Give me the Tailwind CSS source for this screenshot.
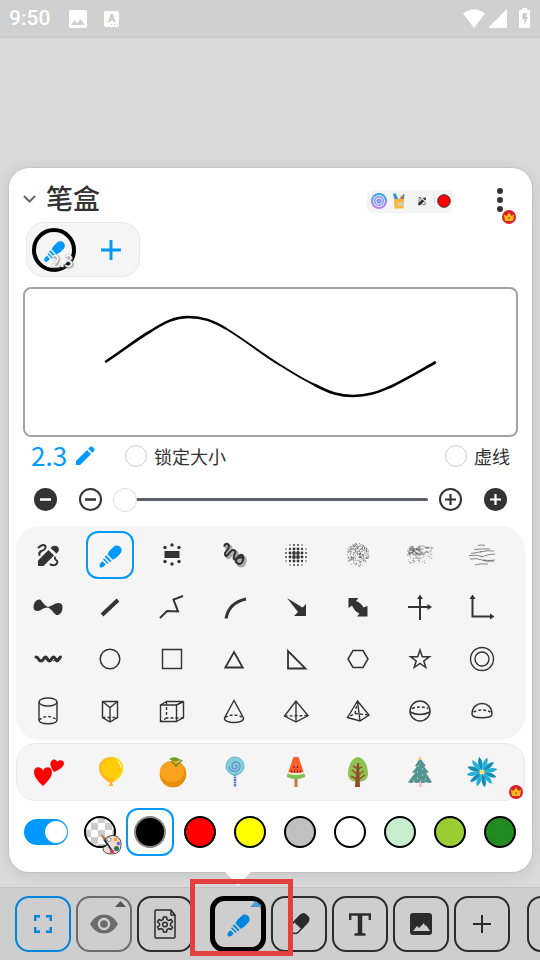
<!DOCTYPE html>
<html lang="zh-CN">
<head>
  <meta charset="UTF-8" />
  <meta name="viewport" content="width=device-width, initial-scale=1.0" />
  <title>笔盒</title>
  <script src="https://cdn.jsdelivr.net/npm/@tailwindcss/browser@4"></script>
</head>
<body class="bg-[#d9d9d9] text-[#333] font-['Noto_Sans_CJK_SC',sans-serif] min-h-screen flex flex-col overflow-x-hidden">

  <!-- Shared icons -->
  <svg class="hidden">
    <symbol id="marker" viewBox="0 0 32 32">
      <g transform="translate(16 18) rotate(-44)" fill="currentColor">
        <path d="M0-3.800 4-4.800H9.500a4.800 4.800 0 0 1 0 9.600H4L0 3.800z" />
        <path d="M-3.600-3.900h2v7.800h-2zM-6.600-3.300h1.500v6.600h-1.500zM-14-.8l2.200-1.400h3.500V2.400h-3.500L-14 1.500z" />
      </g>
    </symbol>
    <symbol id="magic" viewBox="0 0 32 32">
      <path d="M6 27v-5.500L16.500 11l5.500 5.500L11.500 27z" fill="currentColor" />
      <path d="m18.500 9 1.500-1.500q3-1.500 5.500 0 2.500 2.500.5 5.500L24.500 14.500z" fill="currentColor" />
      <path d="M6.500 8.500Q12 4 13.500 7.500q.5 3-4 4.500-3 1.500-2 4M18.500 25.500q4 1.500 6-.5 2-2.500-.5-4-1.500-1-1-2.500" fill="none" stroke="currentColor" stroke-width="2" stroke-linecap="round" />
    </symbol>
    <symbol id="crown" viewBox="0 0 14 14">
      <circle cx="7" cy="7" r="7" fill="#d8202c" />
      <path d="M1.800 4.500 4.500 6 7 2.500 9.500 6l2.700-1.500L11 11H3z" fill="#fbb917" />
      <circle cx="7" cy="8" r="1" fill="#c0501c" />
    </symbol>
  </svg>

  <!-- Status bar -->
  <header class="h-[38px] shrink-0 bg-[#d0d0d0] border-b border-[#c8c8c8] text-white flex items-center pl-[9px] pr-[10px]">
    <span class="font-[Roboto,sans-serif] font-medium text-[21px] leading-none">9:50</span>
    <svg class="w-[18px] h-[18px] ml-[19px]" viewBox="0 0 18 18"><rect width="18" height="18" rx="2" fill="#fff" /><path d="m2 15 3.500-5 2.700 3.500L11.500 9 16 15z" fill="#d0d0d0" /></svg>
    <span class="relative ml-[17px] w-[15px] h-4 rounded-xs bg-white text-[#c8c8c8] font-[Roboto,sans-serif] font-black text-[11px] leading-4 text-center">A
      <svg class="absolute right-px bottom-px w-[7px] h-[2px]" viewBox="0 0 7 2" fill="#c8c8c8"><path d="M0 0h1v1H0zM3 0h1v1H3zM6 0h1v1H6z" /></svg>
    </span>
    <svg class="w-[22px] h-[19px] ml-auto" viewBox="0 0 22 19"><path d="M0 4.500Q11-3.500 22 4.500L11 19z" fill="#fff" /></svg>
    <svg class="w-[18px] h-[19px] ml-1" viewBox="0 0 18 19"><path d="M18 0v17.500q0 1.500-1.500 1.500H0v-1z" fill="#fff" /></svg>
    <svg class="w-[11px] h-5 ml-3 mb-[2px]" viewBox="0 0 11 20"><path d="M3 0h5v2h2q1 0 1 1v16q0 1-1 1H1q-1 0-1-1V3q0-1 1-1h2z" fill="#fff" /><path d="M4 5h4L6.800 9H9l-4 8 .5-6H3z" fill="#c8c8c8" /></svg>
  </header>

  <!-- Pen box -->
  <main class="grow flex flex-col justify-end pl-[9px] pr-2 pb-[15px] bg-[#d9d9d9]">
    <section class="relative bg-white rounded-[20px] pb-4 ring-1 ring-black/5 shadow-[0_2px_14px_rgba(0,0,0,0.1)]">
      <div class="px-[14px]">
        <div class="flex items-center h-[54px] pt-2">
          <button aria-label="收起"><svg class="w-[13px] h-2" viewBox="0 0 13 8"><path d="m1 1 5.500 5.500L12 1" fill="none" stroke="#666" stroke-width="2" /></svg></button>
          <h1 class="ml-[10px] mb-1 text-[27px] leading-none font-medium">笔盒</h1>
          <button class="ml-auto mr-[38px] mt-1 w-[86px] h-[23px] rounded-md bg-[#f4f4f4] flex items-center justify-between pl-1 pr-px" aria-label="快捷工具">
            <svg class="w-4 h-4" viewBox="0 0 16 16" fill="none" stroke-width="2">
              <defs><linearGradient id="ring" x2="0" y2="1"><stop stop-color="#2aa8f8" /><stop offset="1" stop-color="#c878fa" /></linearGradient></defs>
              <circle cx="8" cy="8" r="7" stroke="url(#ring)" /><circle cx="8" cy="8" r="4.300" stroke="#8294fa" stroke-width="1.500" /><circle cx="8" cy="8" r="1.600" stroke="#7b92fb" />
            </svg>
            <svg class="w-3 h-4" viewBox="0 0 12 16"><path d="M0 1.500Q1.500-.5 3 1l2 5H1.500z" fill="#2f91d4" /><path d="m6 6 2.500-4L10 3 9 7z" fill="#ef8a6d" /><path d="m8 6 2.500-5 1 .5L10.500 7z" fill="#5679a0" /><path d="M1 6h10l-.5 9.500h-9z" fill="#ffb63c" /><path d="M5 9.500h5v3H5z" fill="#b9dccb" /></svg>
            <svg class="w-3 h-3 ml-1"><use href="#magic" /></svg>
            <svg class="w-[18px] h-[14px]" viewBox="0 0 18 14"><path d="M.5 4v6" stroke="#ddd" /><circle cx="10" cy="7" r="6.300" fill="#f00" stroke="#333" /></svg>
          </button>
          <button class="relative mr-[9px] mt-[2px] w-[18px] h-6" aria-label="更多">
            <svg class="w-[18px] h-6" viewBox="0 0 18 24" fill="#333"><circle cx="9" cy="3" r="3" /><circle cx="9" cy="12" r="3" /><circle cx="9" cy="21" r="3" /></svg>
            <svg class="absolute left-[11px] top-[22px] w-[14px] h-[14px]"><use href="#crown" /></svg>
          </button>
        </div>

        <div class="ml-[3px] w-[114px] h-[55px] rounded-[18px] border border-[#e8e8e8] bg-[#f5f5f5] flex items-center pl-[5px]">
          <button class="relative w-11 h-11 rounded-full border-4 border-black text-[#0099ff] flex items-center justify-center" aria-label="画笔 2.3">
            <svg class="w-[30px] h-[30px]"><use href="#marker" /></svg>
            <span class="absolute left-[15px] top-[18px] text-[16px] leading-5 text-white [text-shadow:1px_1px_2px_#777,0_0_2px_#888]">2.3</span>
          </button>
          <button class="ml-[25px] text-[#0099ff]" aria-label="添加画笔"><svg class="w-5 h-5" viewBox="0 0 20 20"><path d="M10 0v20M0 10h20" stroke="currentColor" stroke-width="3" /></svg></button>
        </div>

        <!-- Stroke preview -->
        <div class="mt-[10px] h-[150px] border-2 border-[#a3a3a3] rounded-lg">
          <svg class="w-full h-full" viewBox="0 0 491 146" fill="none" stroke="#000" stroke-linecap="round">
            <path d="M81 72.500C100 60 112 50 126 42 140 33 150 28 163 28 178 28 188 32 200 39" stroke-width="2.600" />
            <path d="M200 39C220 51 234 63 255 76 268 84 277 90 290 96" stroke-width="2" />
            <path d="M290 96C305 104 315 107 328 107 345 107 355 102 365 98 380 91 395 82 410 73.500" stroke-width="2.600" />
          </svg>
        </div>

        <div class="flex items-center h-[38px] px-2">
          <button class="flex items-center gap-[9px] pb-[2px] text-[#0099ff] text-[26px] leading-none">2.3
            <svg class="w-[19px] h-[19px]" viewBox="0 0 19 19" fill="currentColor"><path d="M0 15 11 4l4 4L4 19H0zM12.200 2.800l2-2q1-1 2 0l2 2q1 1 0 2l-2 2z" /></svg>
          </button>
          <label class="ml-[30px] flex items-center gap-[7px] pb-px text-[18px] leading-none">
            <input type="checkbox" class="appearance-none w-[22px] h-[22px] rounded-full border border-[#ccc] bg-white checked:bg-[#0099ff]" />锁定大小
          </label>
          <label class="ml-auto flex items-center gap-[7px] pb-px text-[18px] leading-none">
            <input type="checkbox" class="appearance-none w-[22px] h-[22px] rounded-full border border-[#ccc] bg-white checked:bg-[#0099ff]" />虚线
          </label>
        </div>

        <!-- Size slider -->
        <div class="flex items-center h-12">
          <button class="w-[45px] flex justify-center" aria-label="减小很多"><svg class="w-[23px] h-[23px]" viewBox="0 0 23 23"><circle cx="11.500" cy="11.500" r="11.500" fill="#333" /><path d="M6 11.500h11" stroke="#fff" stroke-width="2.500" /></svg></button>
          <button class="w-[45px] flex justify-center" aria-label="减小"><svg class="w-[23px] h-[23px]" viewBox="0 0 23 23" fill="none" stroke="#333"><circle cx="11.500" cy="11.500" r="10.500" stroke-width="2" /><path d="M6 11.500h11" stroke-width="2.500" /></svg></button>
          <input type="range" min="0" max="100" value="0" aria-label="画笔大小" class="grow min-w-0 h-6 appearance-none bg-transparent [&::-webkit-slider-runnable-track]:h-[3px] [&::-webkit-slider-runnable-track]:rounded-full [&::-webkit-slider-runnable-track]:bg-[#5c606b] [&::-webkit-slider-thumb]:appearance-none [&::-webkit-slider-thumb]:w-6 [&::-webkit-slider-thumb]:h-6 [&::-webkit-slider-thumb]:-mt-[10px] [&::-webkit-slider-thumb]:rounded-full [&::-webkit-slider-thumb]:border [&::-webkit-slider-thumb]:border-[#ddd] [&::-webkit-slider-thumb]:bg-white" />
          <button class="w-[45px] flex justify-center" aria-label="增大"><svg class="w-[23px] h-[23px]" viewBox="0 0 23 23" fill="none" stroke="#333"><circle cx="11.500" cy="11.500" r="10.500" stroke-width="2" /><path d="M6 11.500h11M11.500 6v11" stroke-width="2.200" /></svg></button>
          <button class="w-[45px] flex justify-center" aria-label="增大很多"><svg class="w-[23px] h-[23px]" viewBox="0 0 23 23"><circle cx="11.500" cy="11.500" r="11.500" fill="#333" /><path d="M6 11.500h11M11.500 6v11" stroke="#fff" stroke-width="2.200" /></svg></button>
        </div>
      </div>

      <!-- Brushes and shapes -->
      <div class="mx-[7px] mt-[3px] py-[3px] pl-px pr-3 bg-[#f5f5f5] rounded-3xl grid grid-cols-8 auto-rows-[52px] [&>button]:flex [&>button]:items-center [&>button]:justify-center">
        <button aria-label="智能笔"><svg class="w-8 h-8"><use href="#magic" /></svg></button>
        <button aria-label="马克笔"><span class="w-12 h-12 rounded-xl border-2 border-[#0099ff] text-[#0099ff] flex items-center justify-center"><svg class="w-8 h-8"><use href="#marker" /></svg></span></button>
        <button aria-label="荧光笔"><svg class="w-8 h-8" viewBox="0 0 32 32" fill="#333"><path d="M8.500 12h15v7h-15z" /><circle cx="16" cy="6" r="1.700" /><circle cx="16" cy="25" r="1.700" /><circle cx="9" cy="8.500" r="1.700" /><circle cx="23" cy="8.500" r="1.700" /><circle cx="9" cy="22.500" r="1.700" /><circle cx="23" cy="22.500" r="1.700" /></svg></button>
        <button aria-label="阴影笔"><svg class="w-8 h-8" viewBox="0 0 32 32" fill="none" stroke-linecap="round" stroke-linejoin="round"><path d="M6.500 7c0-3 5-3 4.500 1-1 4-5 5-4 8 2 3 5-4 8-5 4 0 2 4 1 6-1 4 1 4 3 2 2-3 5-4 6-2 1 4-1 8-4 8-4-1-4-5-1-6 3-2 5 0 5 1" stroke="#aaa" stroke-width="3" transform="translate(2 2)" /><path d="M6.500 7c0-3 5-3 4.500 1-1 4-5 5-4 8 2 3 5-4 8-5 4 0 2 4 1 6-1 4 1 4 3 2 2-3 5-4 6-2 1 4-1 8-4 8-4-1-4-5-1-6 3-2 5 0 5 1" stroke="#333" stroke-width="2.200" /></svg></button>
        <button aria-label="网点"><svg id="dots" class="w-8 h-8" viewBox="0 0 32 32" fill="#333"></svg></button>
        <button aria-label="喷枪"><svg id="spray" class="w-8 h-8" viewBox="0 0 32 32" stroke="#444" fill="none"></svg></button>
        <button aria-label="蜡笔"><svg id="crayon" class="w-8 h-8" viewBox="0 0 32 32" stroke="#555" fill="none"></svg></button>
        <button aria-label="干笔"><svg class="w-8 h-8" viewBox="0 0 32 32" fill="none" stroke="#555" stroke-width=".7"><path d="M12 6.500q4-1 7 0M8 10.500q7-1 16-.5M14 13q7-2 14-1M5 14.500q7-1 11-2M3 16.500q8-1 13 1M15 18q8-3 14-3M4 20q8-1 12 1t12 1M17 21q6 1 12 0M9 26q6-2 13-1" /></svg></button>

        <button aria-label="粗细笔"><svg class="w-8 h-8" viewBox="0 0 32 32" fill="#333"><path d="M1.500 16.500C1.500 11 5 8 8 8.500c2 1 3 5 8 7.500 4-1 7-4 10-4 5 0 5 3 4 8-2 5-6 5-8 2-2-2-3-4-6-5.500-5 0-8 4-11 3.500q-3.500-.5-3.500-3.500z" /></svg></button>
        <button aria-label="直线"><svg class="w-8 h-8" viewBox="0 0 32 32"><path d="M8 24 24 9" stroke="#333" stroke-width="4" /></svg></button>
        <button aria-label="折线"><svg class="w-8 h-8" viewBox="0 0 32 32"><path d="m4 27 7-7 11 .5-4.500-12L27 5" fill="none" stroke="#333" stroke-width="2" /></svg></button>
        <button aria-label="弧线"><svg class="w-8 h-8" viewBox="0 0 32 32"><path d="M8 27.500Q11 11.500 28 8" fill="none" stroke="#333" stroke-width="3" /></svg></button>
        <button aria-label="箭头"><svg class="w-8 h-8" viewBox="0 0 32 32"><path d="m7 7 15.500 9.500L26 13v12H14l4-4z" fill="#333" /></svg></button>
        <button aria-label="双向箭头"><svg class="w-8 h-8" viewBox="0 0 32 32"><path d="M6.500 7h10l-2.500 3q5 1.500 7.500 6.500L25.500 15v10.500h-10.500l2.500-3Q12.500 20.500 10 14.500L6.500 17z" fill="#333" /></svg></button>
        <button aria-label="坐标轴"><svg class="w-8 h-8" viewBox="0 0 32 32" fill="#333"><path d="M16 6v23M4 16h21" stroke="#333" stroke-width="2" /><path d="m16 3.500 3 4.500h-6zM28 16l-4.500 3v-6z" /></svg></button>
        <button aria-label="直角坐标"><svg class="w-8 h-8" viewBox="0 0 32 32" fill="#333"><path d="M6.500 7v18.500H25" fill="none" stroke="#333" stroke-width="2" /><path d="m6.500 3.500 3 4.500h-6zM28.500 25.500l-4.500 3v-6z" /></svg></button>

        <button aria-label="波浪线"><svg class="w-8 h-8" viewBox="0 0 32 32"><path d="M4 14q2 0 3 2.500t3.500 0 3.500 0 3.500 0 3 0 3.500 0T28 14" fill="none" stroke="#333" /><path d="M4 14q1.500 0 2.500 2t2.500 2 2.500-2 2-2 2 2 2 2 2-2 2-2 2 2 1.500 2 2-2T28.500 14" fill="none" stroke="#333" stroke-width="3" stroke-linejoin="round" stroke-linecap="round" /></svg></button>
        <button aria-label="圆"><svg class="w-8 h-8" viewBox="0 0 32 32"><circle cx="16" cy="16" r="9.800" fill="none" stroke="#333" stroke-width="1.500" /></svg></button>
        <button aria-label="矩形"><svg class="w-8 h-8" viewBox="0 0 32 32"><path d="M6.500 6.500h19v19h-19z" fill="none" stroke="#333" stroke-width="1.400" /></svg></button>
        <button aria-label="三角形"><svg class="w-8 h-8" viewBox="0 0 32 32"><path d="m16 9 8.700 15.500H7.300z" fill="none" stroke="#333" stroke-width="1.800" /></svg></button>
        <button aria-label="直角三角形"><svg class="w-8 h-8" viewBox="0 0 32 32"><path d="M8 8v17.500h17.500z" fill="none" stroke="#333" stroke-width="1.800" /></svg></button>
        <button aria-label="六边形"><svg class="w-8 h-8" viewBox="0 0 32 32"><path d="M11 7.500h10l5 8.500-5 8.500H11L6 16z" fill="none" stroke="#333" stroke-width="1.500" /></svg></button>
        <button aria-label="五角星"><svg class="w-8 h-8" viewBox="0 0 32 32"><path d="m16 7 2.300 6.700h7.200l-5.700 4.300 2 6.500L16 20.500l-5.800 4 2-6.500-5.700-4.300h7.200z" fill="none" stroke="#333" stroke-width="1.500" /></svg></button>
        <button aria-label="同心圆"><svg class="w-8 h-8" viewBox="0 0 32 32" fill="none" stroke="#333" stroke-width="1.400"><circle cx="16" cy="16" r="11.500" /><circle cx="16" cy="16" r="7" /></svg></button>

        <button aria-label="圆柱"><svg class="w-8 h-8" viewBox="0 0 32 32" fill="none" stroke="#333" stroke-width="1.400"><ellipse cx="16" cy="7" rx="9" ry="4" /><path d="M7 7v18c0 5 18 5 18 0V7" /><path d="M7 25q9-7 18 0" stroke-dasharray="3 2" /></svg></button>
        <button aria-label="三棱柱"><svg class="w-8 h-8" viewBox="0 0 32 32" fill="none" stroke="#333" stroke-width="1.400"><path d="M8.500 6.500h15v16L16 27l-7.500-4.500zl7.500 6 7.500-6M16 12.500V27" /><path d="M8.500 22.500h15" stroke-dasharray="3 2" /></svg></button>
        <button aria-label="立方体"><svg class="w-8 h-8" viewBox="0 0 32 32" fill="none" stroke="#333" stroke-width="1.400"><path d="M4.500 10h16v16.500h-16zl6-3.500h17l-7 3.500M27.500 6.500v16l-7 4" /><path d="M10.500 7v16h17M10.500 23l-6 3.500" stroke-dasharray="3 2" /></svg></button>
        <button aria-label="圆锥"><svg class="w-8 h-8" viewBox="0 0 32 32" fill="none" stroke="#333" stroke-width="1.400"><path d="M16 5.500 6.500 23c-1 6 20 6 19 0z" /><path d="M7 22.500q9-5 18 0" stroke-dasharray="3 2" /></svg></button>
        <button aria-label="四面体"><svg class="w-8 h-8" viewBox="0 0 32 32" fill="none" stroke="#333" stroke-width="1.400"><path d="M16 6 4.500 21 16 27l12-6.500zv21" /><path d="M4.500 21 28 20.500" stroke-dasharray="3 2" /></svg></button>
        <button aria-label="四棱锥"><svg class="w-8 h-8" viewBox="0 0 32 32" fill="none" stroke="#333" stroke-width="1.400"><path d="M15.500 6 5.500 22.500 18 26l9-6zL18 26" /><path d="M15.500 6 13 18.500l-7.500 4M13 18.500l14 1.500" stroke-dasharray="3 2" /></svg></button>
        <button aria-label="球体"><svg class="w-8 h-8" viewBox="0 0 32 32" fill="none" stroke="#333" stroke-width="1.500"><circle cx="16" cy="16" r="10" /><path d="M6 17q10 5 20 0" /><path d="M8 13.500q8-3 16 0" stroke-dasharray="3 2" /></svg></button>
        <button aria-label="半球"><svg class="w-8 h-8" viewBox="0 0 32 32" fill="none" stroke="#333" stroke-width="1.500"><path d="M6 19C6 5 26 5 26 19c0 5-20 5-20 0z" /><path d="M7.500 17q8.500-4 17 0" stroke-dasharray="3 2" /></svg></button>
      </div>

      <!-- Stickers -->
      <div class="relative mx-[7px] mt-[3px] h-[58px] pl-px pr-[11px] bg-[#f5f5f5] border border-[#e8e8e8] rounded-[20px] grid grid-cols-8 [&>button]:flex [&>button]:items-center [&>button]:justify-center">
        <button aria-label="爱心"><svg class="w-8 h-8" viewBox="0 0 32 32" fill="#f00"><path d="M10 30C5 25 1 21 1 16c0-6 7-6 9-1.500C12 10 19 10 19 16c0 5-4 9-9 14z" /><path d="M21 16c-3-4-5-8-2.500-11C21 2 24 4 24 6c2-3 7-2 7 1 0 4-5 7-10 9z" /></svg></button>
        <button aria-label="气球"><svg class="w-8 h-8" viewBox="0 0 32 32"><path d="M16 1C9 1 4 6 4 12c0 7 6 12 11 15l-1.500 3h5L17 27c5-3 11-8 11-15C28 6 23 1 16 1z" fill="#ffb51f" /><path d="M18 1c6 1 10 5 10 11 0 7-5 12-10 14 3-8 2-18 0-25z" fill="#ffda00" /><ellipse cx="16" cy="12.500" rx="10" ry="10" fill="#ffcb0a" /><path d="M23 5q3 3 3 7" fill="none" stroke="#fff39a" stroke-width="1.500" /></svg></button>
        <button aria-label="橙子"><svg class="w-8 h-8" viewBox="0 0 32 32"><circle cx="16" cy="18" r="13.300" fill="#e98c08" /><ellipse cx="15" cy="15.500" rx="12" ry="10.500" fill="#faa21f" /><path d="M12 3q6-4 12 1-7 3-12-1z" fill="#739b20" /><path d="m25 4-6 6q-3-4-5-4" fill="none" stroke="#698b1b" stroke-width="1.500" /></svg></button>
        <button aria-label="棒棒糖"><svg class="w-8 h-8" viewBox="0 0 32 32" fill="none"><path d="M16 18v13" stroke="#587fc7" stroke-width="2.500" stroke-dasharray="2 .5" /><circle cx="16" cy="10" r="9" fill="#7fd4da" stroke="#6dadd2" /><path d="M16 10q1-2 2 0c0 4-5 4-5 0 0-6 9-5 8 1-1 6-11 6-11-1" stroke="#6987cf" stroke-width="1.200" /></svg></button>
        <button aria-label="西瓜"><svg class="w-8 h-8" viewBox="0 0 32 32"><path d="M14.500 22h3v9h-3z" fill="#c77a43" /><path d="M13.500 1h5L25 20q-9 6-18 0z" fill="#ff5c2b" /><path d="M8 17q8 2 16 0l1 4q-9 4-18 0z" fill="#7bc653" /><path d="M8.500 16q7.500 2 15 0l.5 2q-8 2-16 0z" fill="#fff3c9" /><path d="M14 10v2M17.500 10v2M11.500 14.500v2M14.500 14.500v2M17.500 14.500v2M20.500 14.500v2" stroke="#603" /></svg></button>
        <button aria-label="树"><svg class="w-8 h-8" viewBox="0 0 32 32"><path d="M16 1C9 2 6 11 6 18c0 5 4 8 10 8s10-3 10-8C26 11 23 2 16 1z" fill="#8fc253" /><path d="M15 7h2l1 24h-5z" fill="#8d4b27" /><path d="m11 10 5 3 4-2M10 14l6 5 6-4M9 20l7 4 7-5" fill="none" stroke="#994f2a" stroke-width="1.500" /></svg></button>
        <button aria-label="圣诞树"><svg class="w-8 h-8" viewBox="0 0 32 32"><path d="M15 26h3v5h-3z" fill="#f8bfc4" /><path d="m16 2 6 8-2 .5 5 6-3 .5 6 9q-3 2-6 0-3 2-6 0-3 2-6 0-3 2-6 0l7-9-3-.5 5-6-2-.5z" fill="#559491" /><circle cx="16" cy="2.500" r="1.500" fill="#f7c95e" /><path d="M14 10h1M18 13h1M13 16h1M18 19h1M21 23h1M13 22h1M9 25h1M16 25h1" stroke="#d8eee8" stroke-width="1.200" /></svg></button>
        <button aria-label="花"><svg id="flower" class="w-8 h-8" viewBox="0 0 32 32"></svg></button>
        <svg class="absolute right-px bottom-px w-[14px] h-[14px]"><use href="#crown" /></svg>
      </div>

      <!-- Colours -->
      <div class="mx-[7px] mt-[7px] h-12 flex items-center">
        <div class="w-[59px] pl-2 shrink-0 flex">
          <input type="checkbox" role="switch" checked aria-label="显示颜色" class="relative appearance-none w-11 h-[26px] rounded-full bg-[#ccc] checked:bg-[#0099ff] before:absolute before:top-[2px] before:left-[2px] checked:before:left-[21px] before:w-[22px] before:h-[22px] before:rounded-full before:bg-white" />
        </div>
        <div id="colors" class="grow grid grid-cols-9 justify-items-center items-center"></div>
      </div>

      <svg class="absolute left-[216px] top-full w-[26px] h-[14px]" viewBox="0 0 26 14"><path d="M0 0h26L16 10l-3 4-3-4z" fill="#fff" /></svg>
    </section>
  </main>

  <!-- Toolbar -->
  <nav class="h-[73px] shrink-0 bg-[#cecece] border-t border-[#c2c2c2] flex gap-[5px] pt-2 pl-[15px] overflow-x-clip [&>button]:relative [&>button]:shrink-0 [&>button]:w-14 [&>button]:h-14 [&>button]:rounded-[14px] [&>button]:flex [&>button]:items-center [&>button]:justify-center">
    <button class="border-2 border-[#0085dd] text-[#0085dd]" aria-label="全屏"><svg class="w-[18px] h-[18px]" viewBox="0 0 18 18" fill="none" stroke="currentColor" stroke-width="2.500"><path d="M1.200 6V1.200H6M12 1.200h4.800V6M16.800 12v4.800H12M6 16.800H1.200V12" /></svg></button>
    <button class="border-2 border-[#6c6c6c] text-[#6c6c6c]" aria-label="显示">
      <svg class="w-7 h-5" viewBox="0 0 28 20"><path d="M0 10Q5 .5 14 .5T28 10q-5 9.500-14 9.500T0 10z" fill="currentColor" /><circle cx="14" cy="10" r="5" fill="currentColor" stroke="#cecece" stroke-width="2.500" /></svg>
      <svg class="absolute right-1 top-[3px] w-[11px] h-[6px]" viewBox="0 0 11 6"><path d="M0 6 5.500 0 11 6z" fill="#555" /></svg>
    </button>
    <button class="border-2 border-[#2b2b2b] text-[#2b2b2b]" aria-label="页面设置"><svg class="w-[22px] h-[30px]" viewBox="0 0 22 30" fill="none" stroke="currentColor" stroke-width="1.500"><path d="M2 1h15l4 5v22q0 1-1 1H2q-1 0-1-1V2q0-1 1-1zM17 1v5h4" /><path d="M9.500 8h3l.5 2.500 1.500 1 2.500-1 1.500 2.500-2 1.500v2l2 1.500-1.500 2.500-2.500-1-1.500 1-.5 2.500h-3L9 20.500l-1.500-1-2.500 1L3.500 18l2-1.500v-2l-2-1.500L5 10.500l2.500 1 1.500-1z" stroke-linejoin="round" /><circle cx="11" cy="15.500" r="2.300" /></svg></button>
    <button class="ml-3 border-[5px] border-black text-[#0085dd]" aria-label="画笔">
      <svg class="w-8 h-8"><use href="#marker" /></svg>
      <svg class="absolute right-0 top-0 w-[11px] h-[6px]" viewBox="0 0 11 6"><path d="M0 6 6 0l5 4v2z" fill="#4499d4" /></svg>
      <span class="absolute z-10 -left-[25px] -top-[22px] w-[103px] h-[77px] border-[5px] border-[#e53e3e] pointer-events-none"></span>
    </button>
    <button class="border-2 border-[#2b2b2b] text-[#2b2b2b]" aria-label="橡皮"><svg class="w-6 h-6" viewBox="0 0 24 24"><g transform="rotate(-47 12 12)"><rect x="1" y="7" width="22" height="10" rx="4.500" fill="none" stroke="currentColor" stroke-width="1.500" /><path d="M10 6.500h9q5 0 5 4v3q0 4-5 4h-9z" fill="currentColor" /></g></svg></button>
    <button class="border-2 border-[#2b2b2b] text-[#2b2b2b]" aria-label="文字"><svg class="w-[22px] h-[23px]" viewBox="0 0 22 23" fill="none" stroke="currentColor"><path d="M1.200 7V1.500h19.600V7" stroke-width="2.400" /><path d="M11 1v20" stroke-width="4.500" /><path d="M5.500 21.500h11" stroke-width="2.500" /></svg></button>
    <button class="border-2 border-[#2b2b2b] text-[#2b2b2b]" aria-label="图片"><svg class="w-[22px] h-[22px]" viewBox="0 0 22 22"><rect width="22" height="22" rx="3" fill="currentColor" /><path d="m3 18 4-5 2 2 5-5 1 3 1-1 4 6z" fill="#cecece" /></svg></button>
    <button class="border-2 border-[#2b2b2b] text-[#2b2b2b]" aria-label="添加"><svg class="w-[18px] h-[18px]" viewBox="0 0 18 18"><path d="M9 0v18M0 9h18" stroke="currentColor" stroke-width="2" /></svg></button>
    <button class="ml-3 border-2 border-[#2b2b2b]" aria-label="更多工具"></button>
  </nav>

  <script>
    // same texture on every load
    let seed = 7;
    function rand() {
      seed = (seed * 16807) % 2147483647;
      return seed / 2147483647;
    }

    let dots = "";
    for (let i = -3; i <= 2; i++) {
      for (let j = -3; j <= 2; j++) {
        const d = Math.hypot(i + 0.5, j + 0.5);
        if (d < 3) dots += `<circle cx="${18 + i * 4}" cy="${18 + j * 4}" r="${(2.3 - d * 0.55).toFixed(2)}"/>`;
      }
    }
    document.getElementById("dots").innerHTML = dots;

    let spray = "";
    for (let i = 0; i < 260; i++) {
      const a = rand() * 6.283, r = Math.sqrt(rand()) * 11.5;
      spray += `M${(16 + r * Math.cos(a)).toFixed(1)} ${(16 + r * Math.sin(a)).toFixed(1)}l${(rand() * 2 - 1).toFixed(1)} ${(rand() * 2 - 1).toFixed(1)}`;
    }
    document.getElementById("spray").innerHTML = `<path d="${spray}" stroke-width=".7"/>`;

    let crayon = "";
    for (let i = 0; i < 150; i++) {
      const x = 3 + 24 * (i % 2 ? rand() : rand() * 0.55);
      crayon += `M${x.toFixed(1)} ${(7 + rand() * (i % 3 ? 9 : 18)).toFixed(1)}l${(0.5 + rand() * 2.5).toFixed(1)} ${(rand() * 1.5 - 0.5).toFixed(1)}`;
    }
    document.getElementById("crayon").innerHTML = `<path d="${crayon}" stroke-width=".5"/>`;

    let petals = "";
    for (let i = 0; i < 12; i++) {
      petals += `<path d="M16 15Q11.500 6 16 .5 20 6 16 15z" fill="${i % 2 ? "#22b2d8" : "#168db4"}" transform="rotate(${i * 30 - 10} 16 16)"/>`;
    }
    document.getElementById("flower").innerHTML = petals + '<circle cx="16" cy="16" r="2" fill="#ffd52b" stroke="#fff0a0"/>';

    const colors = [
      { name: "黑色", value: "#000000", selected: true },
      { name: "红色", value: "#ff0000" },
      { name: "黄色", value: "#ffff00" },
      { name: "灰色", value: "#c0c0c0" },
      { name: "白色", value: "#ffffff" },
      { name: "浅绿", value: "#c6edcd" },
      { name: "黄绿", value: "#9acd32" },
      { name: "绿色", value: "#228b22" },
    ];

    const palette = `
      <button class="relative w-8 h-8" aria-label="自定义颜色">
        <svg class="w-8 h-8" viewBox="0 0 32 32"><defs><pattern id="checks" width="14" height="14" patternUnits="userSpaceOnUse"><path d="M0 0h14v14H0z" fill="#fff"/><path d="M0 0h7v7H0zM7 7h7v7H7z" fill="#ccc"/></pattern></defs><circle cx="16" cy="16" r="15" fill="url(#checks)" stroke="#000" stroke-width="2"/></svg>
        <svg class="absolute left-[17px] top-[18px] w-[21px] h-[21px]" viewBox="0 0 21 21"><path d="M4 5Q9 0 15 2q6 3 5 10-1 8-9 8-7 0-9-4-1-3 3-4 2-2-1-4-2-1 0-3z" fill="#f0ded2" stroke="#222" stroke-width=".8"/><path d="m2 3 9 14" stroke="#26335a" stroke-width="1.800"/><path d="m0 0 3 2 1 4q-3-1-4-6z" fill="#d67b16"/><circle cx="8" cy="5.500" r="2" fill="#fff" stroke="#333" stroke-width=".5"/><circle cx="14.500" cy="5.500" r="2" fill="#f2a73d"/><circle cx="17.500" cy="9.500" r="2" fill="#7770d8"/><circle cx="15.500" cy="14.500" r="2.500" fill="#24745a"/><circle cx="11" cy="17.500" r="2" fill="#e32c63"/></svg>
      </button>`;

    document.getElementById("colors").innerHTML = palette + colors.map(({ name, value, selected }) => selected
      ? `<button class="w-12 h-12 rounded-xl border-2 border-[#0099ff] flex items-center justify-center" aria-label="${name}"><span class="w-8 h-8 rounded-full border-2 border-[#888]" style="background:${value}"></span></button>`
      : `<button class="w-8 h-8 rounded-full border-2 border-black" aria-label="${name}" style="background:${value}"></button>`
    ).join("");
  </script>
</body>
</html>
